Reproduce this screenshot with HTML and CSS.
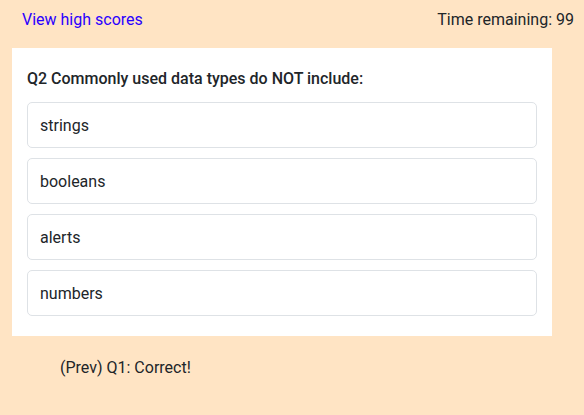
FILE: index.html
```html
<!DOCTYPE html>
<html>
<head>
<meta charset="utf-8">
<link rel="stylesheet" href="styles.css">
</head>
<body>
<header class="topbar">
  <a class="scores-link" href="#">View high scores</a>
  <span class="timer">Time remaining: 99</span>
</header>
<main class="quiz-card">
  <h2 class="question">Q2 Commonly used data types do NOT include:</h2>
  <div class="choices">
    <button class="choice">strings</button>
    <button class="choice">booleans</button>
    <button class="choice">alerts</button>
    <button class="choice">numbers</button>
  </div>
</main>
<p class="feedback">(Prev) Q1: Correct!</p>
</body>
</html>
```
FILE: styles.css
```css
html, body {
  margin: 0;
  padding: 0;
}
body {
  background: #ffe4c4;
  font-family: Roboto, "Liberation Sans", sans-serif;
  color: #212529;
  font-size: 16px;
  height: 415px;
}
.topbar {
  display: flex;
  justify-content: space-between;
  align-items: center;
  height: 40px;
  padding: 0 10px 0 22px;
  margin-bottom: 8px;
  line-height: 24px;
}
.scores-link {
  color: #2a00ff;
  text-decoration: none;
}
.timer {
  color: #212529;
}
.quiz-card {
  background: #fff;
  width: 510px;
  margin-left: 12px;
  padding: 19px 15px 20px;
}
.question {
  margin: 0 0 11px;
  font-size: 16px;
  font-weight: 500;
  line-height: 24px;
}
.choices {
  display: flex;
  flex-direction: column;
  gap: 10px;
}
.choice {
  display: block;
  width: 100%;
  height: 46px;
  text-align: left;
  background: #fff;
  border: 1px solid #dee2e6;
  border-radius: 5px;
  padding: 0 12px;
  font-family: inherit;
  font-size: 16px;
  color: #212529;
}
.feedback {
  margin: 20px 0 0 60px;
  line-height: 24px;
}
```
